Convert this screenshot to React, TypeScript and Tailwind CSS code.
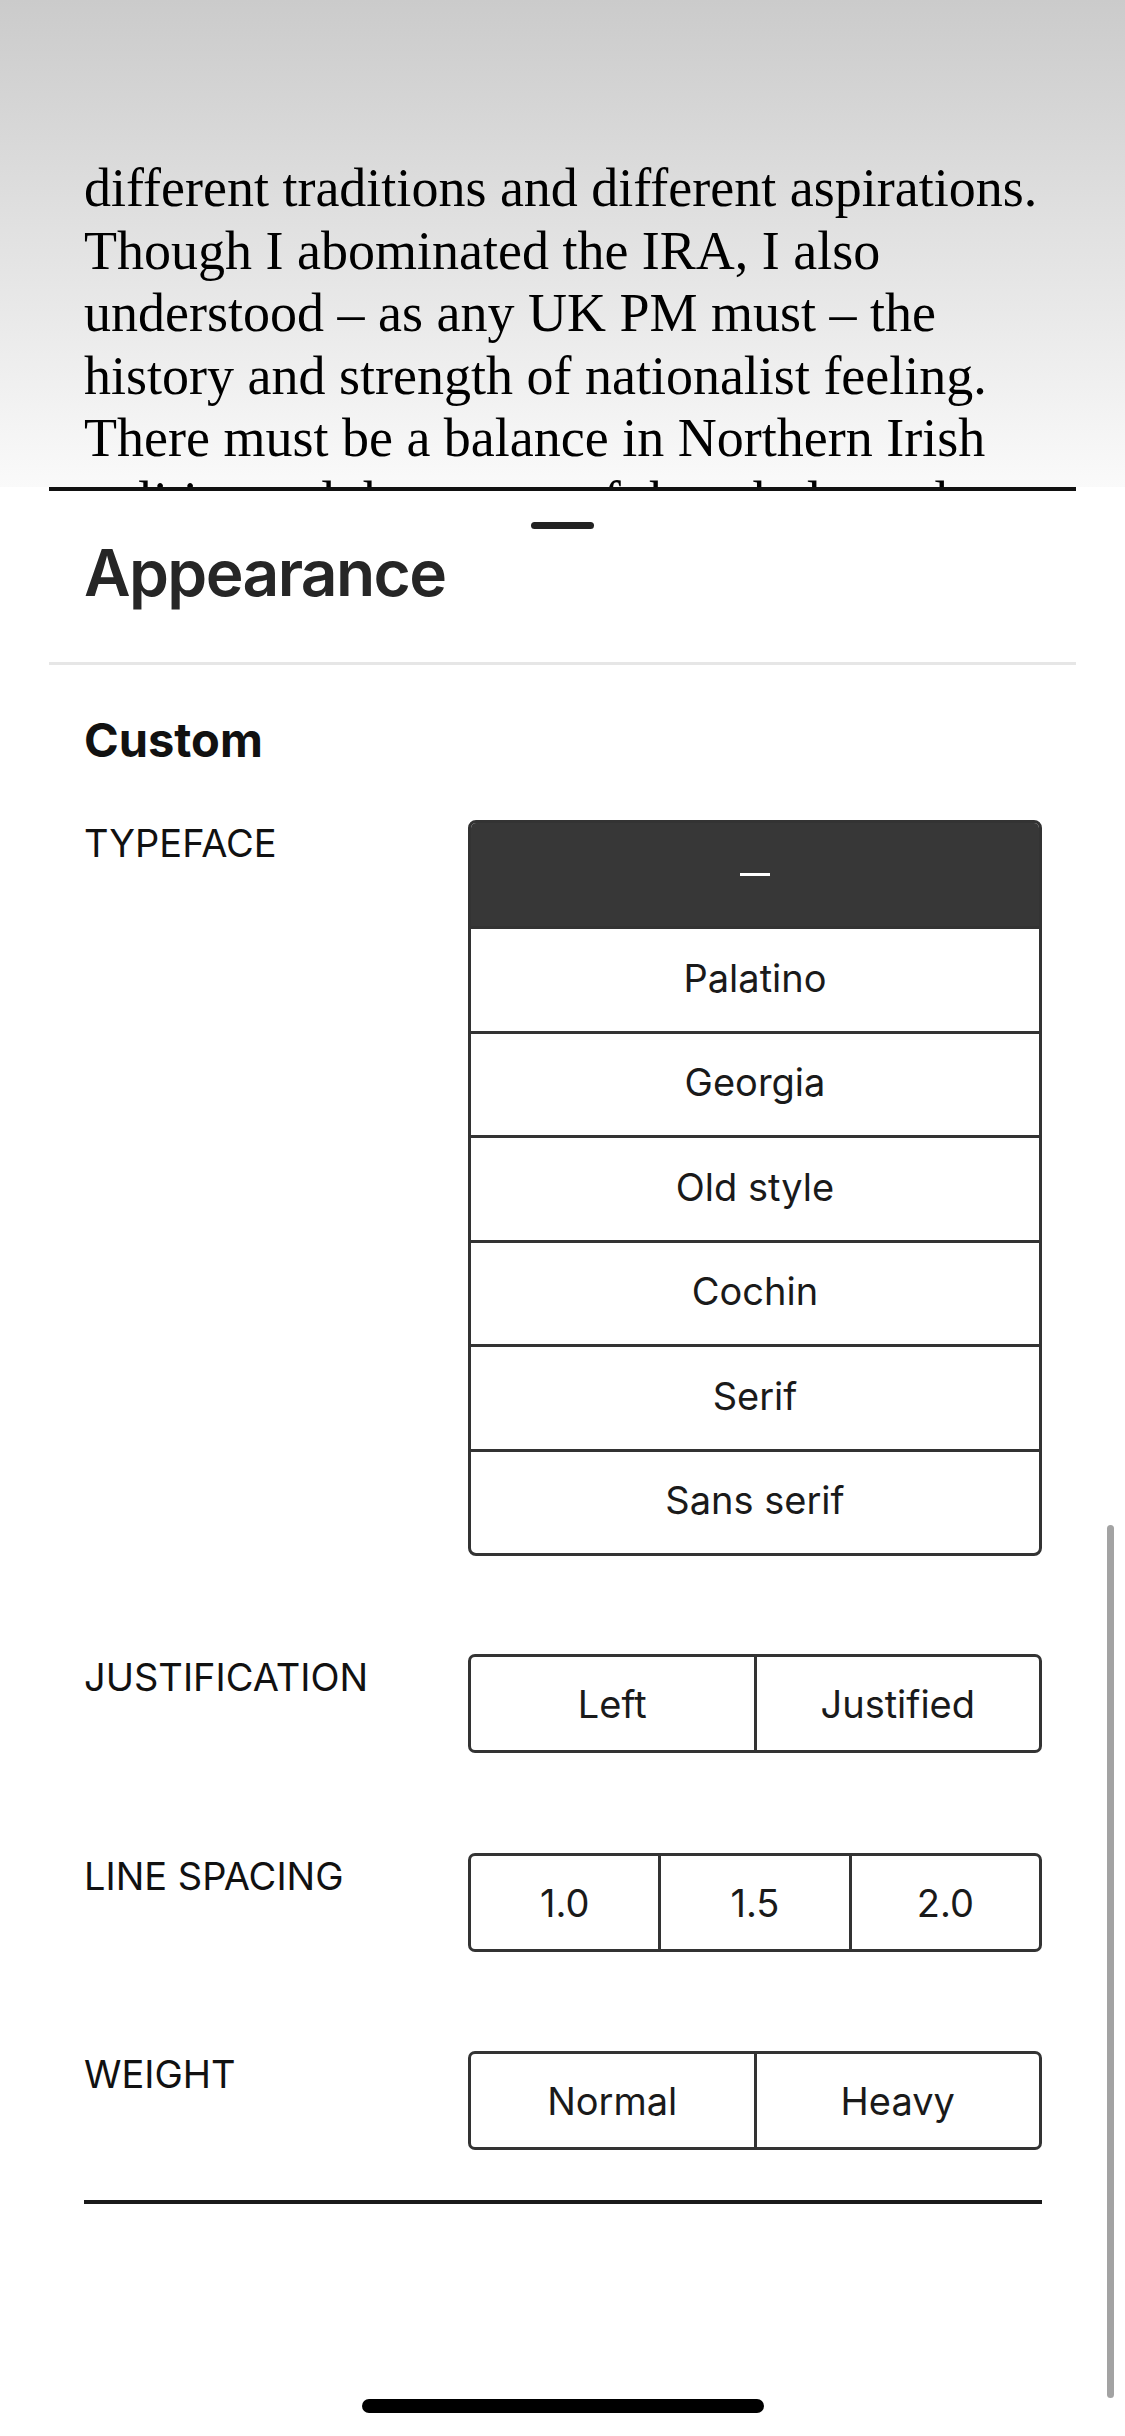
import React from 'react'

const readerLines = [
  'different traditions and different aspirations.',
  'Though I abominated the IRA, I also',
  'understood – as any UK PM must – the',
  'history and strength of nationalist feeling.',
  'There must be a balance in Northern Irish',
  'politics and the nature of the whole settlement',
]

const typefaces = ['Palatino', 'Georgia', 'Old style', 'Cochin', 'Serif', 'Sans serif']

const Segmented = ({ items }: { items: string[] }) => {
  return (
    <div className="flex w-[574px] h-[99px] rounded-[7px] border-[3px] border-[#333333] overflow-hidden">
      {items.map((item, i) => (
        <div
          key={item}
          className={
            'flex-1 flex items-center justify-center text-[38px] leading-[38px] text-[#1a1a1a] ' +
            (i > 0 ? 'border-l-[3px] border-[#333333]' : '')
          }
        >
          {item}
        </div>
      ))}
    </div>
  )
}

const OptionRow = ({ label, children }: { label: string; children: React.ReactNode }) => {
  return (
    <div className="flex justify-between">
      <div className="mt-[4px] text-[38px] leading-[38px] text-[#111111]">{label}</div>
      {children}
    </div>
  )
}

const App = () => {
  return (
    <div className="relative w-[1125px] h-[2436px] bg-white overflow-hidden font-['Inter',sans-serif]">
      {/* page of the book behind the sheet */}
      <div className="h-[487px] overflow-hidden bg-gradient-to-b from-[#cbcbcb] to-[#fafafa] pl-[84px] pt-[157px] font-['Liberation_Serif',serif] text-[54px] leading-[62.5px] text-black">
        {readerLines.map((line) => (
          <div key={line} className="whitespace-nowrap">{line}</div>
        ))}
      </div>
      <div className="mx-[49px] h-[4px] bg-[#111111]" />

      {/* appearance sheet */}
      <div className="px-[49px]">
        <div className="mx-auto mt-[31px] h-[7px] w-[63px] rounded-full bg-[#222222]" />
        <h1 className="mt-[12px] px-[35px] text-[64px] leading-[64px] font-semibold tracking-[-0.025em] text-[#262626]">
          Appearance
        </h1>
        <div className="mt-[57px] h-[3px] bg-[#e6e6e6]" />

        <div className="pl-[35px] pr-[34px]">
          <h2 className="mt-[51px] text-[47px] leading-[47px] font-bold text-[#111111]">Custom</h2>

          <div className="mt-[57px]">
            <OptionRow label="TYPEFACE">
              <div className="w-[574px] rounded-[8px] border-[3px] border-[#333333] overflow-hidden">
                <div className="flex h-[103px] items-center justify-center bg-[#373737]">
                  <div className="h-[3px] w-[30px] bg-white" />
                </div>
                {typefaces.map((t) => (
                  <div
                    key={t}
                    className="flex h-[104.5px] items-center justify-center border-t-[3px] border-[#333333] pb-[4px] text-[38px] leading-[38px] text-[#1a1a1a]"
                  >
                    {t}
                  </div>
                ))}
              </div>
            </OptionRow>
          </div>

          <div className="mt-[98px]">
            <OptionRow label="JUSTIFICATION">
              <Segmented items={['Left', 'Justified']} />
            </OptionRow>
          </div>

          <div className="mt-[100px]">
            <OptionRow label="LINE SPACING">
              <Segmented items={['1.0', '1.5', '2.0']} />
            </OptionRow>
          </div>

          <div className="mt-[99px]">
            <OptionRow label="WEIGHT">
              <Segmented items={['Normal', 'Heavy']} />
            </OptionRow>
          </div>

          <div className="mt-[50px] h-[4px] bg-[#1a1a1a]" />
        </div>
      </div>

      <div className="mx-auto mt-[195px] h-[14px] w-[402px] rounded-full bg-black" />

      {/* scroll indicator */}
      <div className="absolute left-[1107px] top-[1525px] h-[873px] w-[7px] rounded-full bg-[#a3a3a3]" />
    </div>
  )
}

export default App
